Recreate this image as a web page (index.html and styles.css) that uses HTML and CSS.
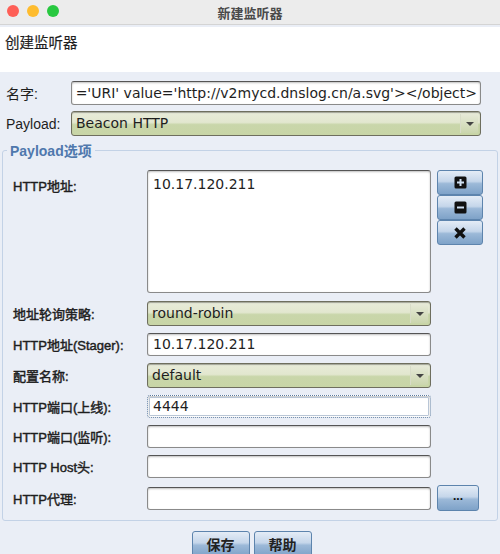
FILE: index.html
```html
<!DOCTYPE html>
<html lang="zh">
  <head>
    <meta charset="utf-8" />
    <title>新建监听器</title>
    <link rel="stylesheet" href="styles.css">
  </head>

  <body>
    <div class="titlebar">
      <span class="light red"></span>
      <span class="light yellow"></span>
      <span class="light green"></span>
      <span class="title">新建监听器</span>
    </div>

    <div class="header">创建监听器</div>

    <div class="top-form">
      <label>名字:</label>
      <div class="field text clip"><span>='URI' value='http://v2mycd.dnslog.cn/a.svg'&gt;&lt;/object&gt;</span></div>
      <label>Payload:</label>
      <div class="field select"><span>Beacon HTTP</span><i class="arrow"></i></div>
    </div>

    <fieldset class="options">
      <legend>Payload选项</legend>

      <div class="grid">
        <label class="tall">HTTP地址:</label>
        <div class="field area">10.17.120.211</div>
        <div class="side">
          <button class="btn icon" title="add">
            <svg width="13" height="13" viewBox="0 0 13 13"><rect x="0.5" y="0.5" width="12" height="12" rx="1.5" fill="#111"/><path d="M6.5 3v7M3 6.5h7" stroke="#cfe0f2" stroke-width="2"/></svg>
          </button>
          <button class="btn icon" title="remove">
            <svg width="13" height="13" viewBox="0 0 13 13"><rect x="0.5" y="0.5" width="12" height="12" rx="1.5" fill="#111"/><path d="M3 6.5h7" stroke="#cfe0f2" stroke-width="2"/></svg>
          </button>
          <button class="btn icon" title="clear">
            <svg width="14" height="14" viewBox="0 0 14 14"><path d="M2.5 2.5l9 9M11.5 2.5l-9 9" stroke="#111" stroke-width="3.4"/></svg>
          </button>
        </div>

        <label>地址轮询策略:</label>
        <div class="field select"><span>round-robin</span><i class="arrow"></i></div>
        <div></div>

        <label>HTTP地址(Stager):</label>
        <div class="field text">10.17.120.211</div>
        <div></div>

        <label>配置名称:</label>
        <div class="field select"><span>default</span><i class="arrow"></i></div>
        <div></div>

        <label>HTTP端口(上线):</label>
        <div class="field text focus">4444</div>
        <div></div>

        <label>HTTP端口(监听):</label>
        <div class="field text"></div>
        <div></div>

        <label>HTTP Host头:</label>
        <div class="field text"></div>
        <div></div>

        <label>HTTP代理:</label>
        <div class="field text"></div>
        <div><button class="btn dots">...</button></div>
      </div>
    </fieldset>

    <div class="actions">
      <button class="btn wide">保存</button>
      <button class="btn wide">帮助</button>
    </div>
  </body>
</html>
```

FILE: styles.css
```css
body {
  margin: 0;
  width: 500px;
  height: 554px;
  overflow: hidden;
  background: #eaeef6;
  font-family: "Liberation Sans", "Noto Sans CJK SC", sans-serif;
  font-size: 13px;
  color: #1e1e1e;
}
.titlebar {
  position: relative;
  height: 24px;
  background: #ececec;
  border-bottom: 1px solid #d4d4d4;
  display: flex;
  align-items: center;
  padding-left: 7px;
  gap: 8px;
}
.light {
  width: 12px;
  height: 12px;
  border-radius: 50%;
  margin-top: -2px;
}
.red { background: #fe5f57; }
.yellow { background: #febc2e; }
.green { background: #28c840; }
.title {
  position: absolute;
  left: 0;
  right: 0;
  top: 3px;
  text-align: center;
  font-weight: bold;
  color: #4a4a4a;
  font-size: 13px;
}
.header {
  margin-top: 2px;
  height: 45px;
  background: #fff;
  padding: 4px 5px 0;
  box-sizing: border-box;
  font-size: 14.5px;
  -webkit-text-stroke: 0.2px #1e1e1e;
}
.top-form {
  display: grid;
  grid-template-columns: 65px 410px;
  row-gap: 6px;
  padding: 9px 0 0 6px;
  align-items: center;
}
.top-form label { font-size: 14px; }
.field {
  box-sizing: border-box;
  height: 23px;
  border: 1px solid #8a8a8a;
  border-top-color: #555;
  border-radius: 3px;
  background: #fff;
  box-shadow: inset 0 1px 2px rgba(0, 0, 0, 0.25);
  padding: 0 5px;
  font-family: "DejaVu Sans", "Noto Sans CJK SC", sans-serif;
  font-size: 14px;
  line-height: 21px;
  white-space: nowrap;
  overflow: hidden;
}
.top-form .field.text { height: 24px; line-height: 22px; }
.clip {
  display: flex;
  justify-content: flex-end;
  padding: 0 3px;
}
.select {
  height: 25px;
  line-height: 23px;
  position: relative;
  background: linear-gradient(#e8ebd9, #e2e7cf 45%, #c9d6aa 55%, #c8d5a6);
  border-color: #6e6e5e;
  box-shadow: inset 0 1px 1px rgba(0, 0, 0, 0.3);
  padding-left: 4px;
}
.arrow {
  position: absolute;
  right: 2px;
  top: 2px;
  width: 17px;
  height: 19px;
  border-left: 1px solid #d8dcc8;
  background: linear-gradient(#e6e9d8, #cbd6ae);
  border-radius: 0 2px 2px 0;
}
.arrow::after {
  content: "";
  position: absolute;
  left: 5px;
  top: 8px;
  border-left: 4px solid transparent;
  border-right: 4px solid transparent;
  border-top: 4px solid #444;
}
.options {
  margin: 4px 2px 0;
  padding: 0 0 8px 10px;
  border: 1px solid #c3d2e6;
  border-radius: 3px;
  height: 381px;
  box-sizing: border-box;
}
.options legend {
  color: #4f78ad;
  font-weight: bold;
  font-size: 14px;
  padding: 0 3px;
  margin-left: -6px;
}
.grid {
  display: grid;
  grid-template-columns: 128px 284px 46px;
  column-gap: 6px;
  row-gap: 7px;
  align-items: center;
  margin-top: 10px;
}
.grid label {
  font-size: 13px;
  -webkit-text-stroke: 0.45px #1e1e1e;
}
.grid label.tall {
  align-self: start;
  padding-top: 6px;
}
.area {
  height: 123px;
  line-height: 26px;
  padding: 0 5px;
  margin-bottom: 1px;
}
.focus {
  border: 1px dotted #5a7aa0;
  outline: 1px solid #b9c6d6;
  outline-offset: -3px;
}
.side {
  align-self: start;
  display: flex;
  flex-direction: column;
}
.btn {
  box-sizing: border-box;
  border: 1px solid #5d84ad;
  border-radius: 3px;
  background: linear-gradient(#e4ecf6, #c5d6ea 45%, #9cb9d8 55%, #7ea2c8);
  font-family: inherit;
  color: #111;
  padding: 0;
  display: flex;
  align-items: center;
  justify-content: center;
}
.icon {
  width: 46px;
  height: 25px;
}
.dots {
  width: 42px;
  height: 26px;
  font-weight: bold;
  font-size: 12px;
  padding-bottom: 4px;
}
.actions {
  display: flex;
  justify-content: center;
  gap: 4px;
  padding-top: 10px;
  padding-left: 3px;
}
.wide {
  width: 58px;
  height: 26px;
  font-size: 14px;
  font-weight: bold;
  color: #222;
}
```
